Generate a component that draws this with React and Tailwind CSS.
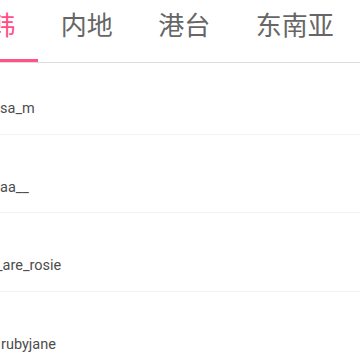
export default function App() {
  const tabs = ["日韩", "内地", "港台", "东南亚"];
  const rows = [
    { name: "lisa_m", shift: "-ml-[7px]" },
    { name: "aa__", shift: "ml-0" },
    { name: "_are_rosie", shift: "-ml-[4px]" },
    { name: "rubyjane", shift: "ml-px" },
  ];
  return (
    <div
      className="w-[360px] h-[360px] overflow-hidden bg-white"
      style={{ fontFamily: 'Roboto, "Noto Sans CJK SC", sans-serif' }}
    >
      <div className="h-[63px] border-b border-[#dcdcdc] flex overflow-hidden">
        <div className="flex -ml-[59.5px] shrink-0">
          {tabs.map((t, i) => (
            <div
              key={t}
              className={
                "relative h-[62px] px-[22.75px] flex items-center shrink-0 text-[26px] leading-none " +
                (i === 0 ? "text-[#ff4f86]" : "text-[#666666]")
              }
              style={{ fontFamily: '"Noto Sans CJK SC", sans-serif' }}
            >
              <span className="-mt-[14px]">{t}</span>
              {i === 0 && (
                <div className="absolute left-0 right-0 bottom-0 h-[3px] bg-[#ff5288]" />
              )}
            </div>
          ))}
        </div>
      </div>
      <div className="-mt-[7px]">
        {rows.map((r) => (
          <div key={r.name} className="h-[78.5px] border-b border-[#f2f2f2] flex">
            <div className={"pt-[43px] text-[14.5px] leading-[20px] text-[#4d4d4d] whitespace-nowrap " + r.shift}>
              {r.name}
            </div>
          </div>
        ))}
      </div>
    </div>
  );
}
